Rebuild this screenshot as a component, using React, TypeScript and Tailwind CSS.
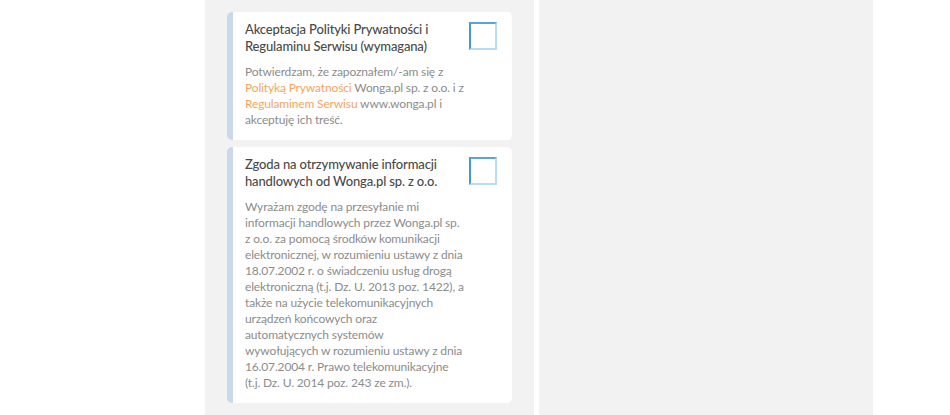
import React from "react";

const font = { fontFamily: "Lato, 'Open Sans', sans-serif" };

function Checkbox() {
  return (
    <div className="mt-[10px] w-[28px] h-[28px] shrink-0 border-2 border-t-[#5aa2e0] border-l-[#4796dc] border-r-[#b8dcf6] border-b-[#b8dcf6] bg-white" />
  );
}

function Card({ title, lines }: { title: string[]; lines: React.ReactNode[] }) {
  return (
    <div className="flex bg-white rounded-[5px] border-l-[6px] border-[#c9d9ea] pl-[12px] pr-[15px]">
      <div className="flex-1 pt-[9px] pb-[12px]">
        <div className="text-[13px] leading-[17px] font-medium tracking-[-0.15px] text-[#4a4a4a]">
          {title.map((t, i) => (
            <div key={i} className="whitespace-nowrap">{t}</div>
          ))}
        </div>
        <div className="mt-[9px] text-[12px] leading-[16px] tracking-[-0.15px] text-[#8c8c8c]">
          {lines.map((l, i) => (
            <div key={i} className="whitespace-nowrap">{l}</div>
          ))}
        </div>
      </div>
      <Checkbox />
    </div>
  );
}

const link = "text-[#f7a45e]";

export default function App() {
  return (
    <div className="w-[950px] h-[415px] bg-white flex overflow-hidden" style={font}>
      <div className="w-[205px] shrink-0" />
      <div className="w-[329px] shrink-0 bg-[#f2f2f2] pt-[12px] px-[22px] flex flex-col gap-[7px]">
        <Card
          title={["Akceptacja Polityki Prywatności i", "Regulaminu Serwisu (wymagana)"]}
          lines={[
            "Potwierdzam, że zapoznałem/-am się z",
            <>
              <span className={link}>Polityką Prywatności</span> Wonga.pl sp. z o.o. i z
            </>,
            <>
              <span className={link}>Regulaminem Serwisu</span> www.wonga.pl i
            </>,
            "akceptuję ich treść.",
          ]}
        />
        <Card
          title={["Zgoda na otrzymywanie informacji", "handlowych od Wonga.pl sp. z o.o."]}
          lines={[
            "Wyrażam zgodę na przesyłanie mi",
            "informacji handlowych przez Wonga.pl sp.",
            "z o.o. za pomocą środków komunikacji",
            "elektronicznej, w rozumieniu ustawy z dnia",
            "18.07.2002 r. o świadczeniu usług drogą",
            "elektroniczną (t.j. Dz. U. 2013 poz. 1422), a",
            "także na użycie telekomunikacyjnych",
            "urządzeń końcowych oraz",
            "automatycznych systemów",
            "wywołujących w rozumieniu ustawy z dnia",
            "16.07.2004 r. Prawo telekomunikacyjne",
            "(t.j. Dz. U. 2014 poz. 243 ze zm.).",
          ]}
        />
      </div>
      <div className="w-[5px] shrink-0" />
      <div className="w-[334px] shrink-0 bg-[#f2f2f2]" />
    </div>
  );
}
